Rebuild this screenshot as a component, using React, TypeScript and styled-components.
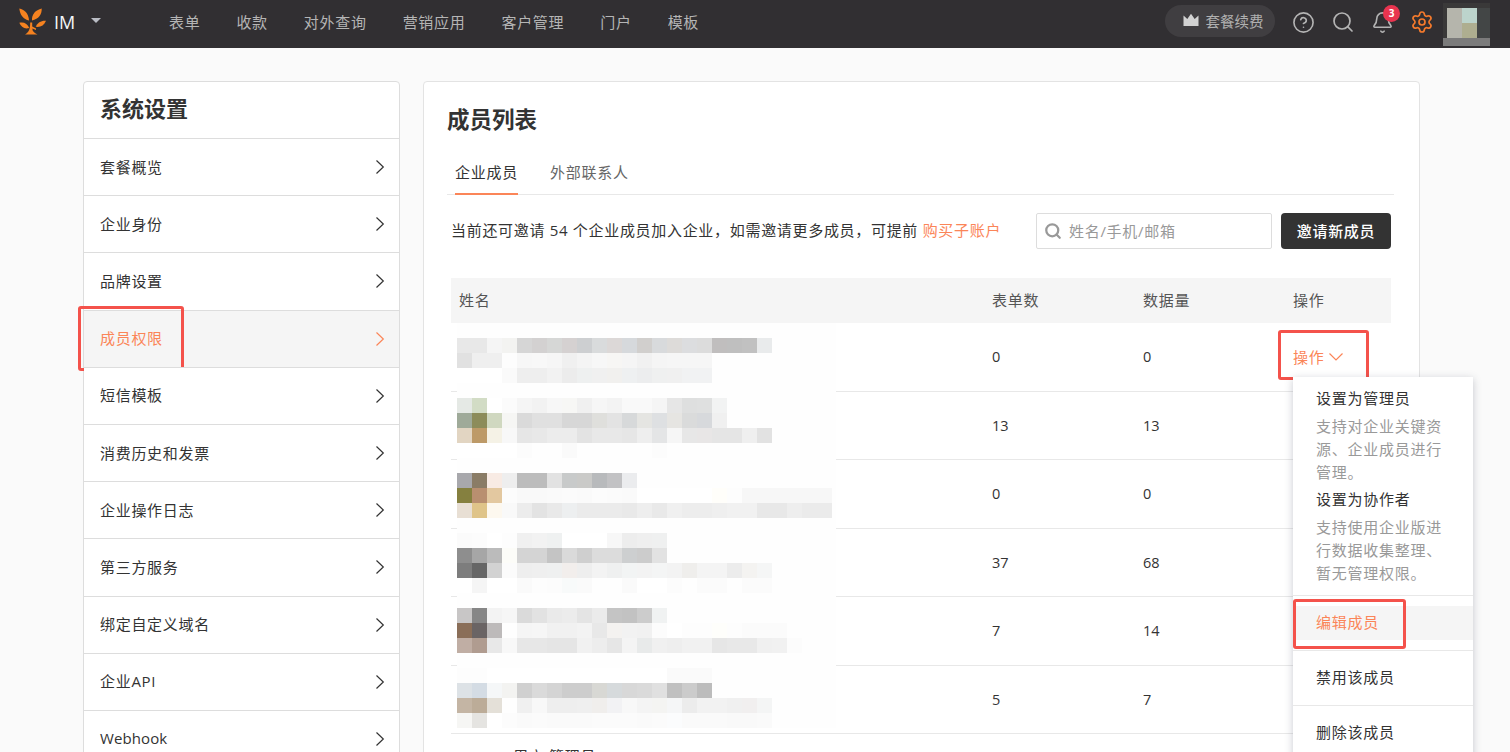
import React from 'react'
import styled, { createGlobalStyle } from 'styled-components'
import { Bell, CircleHelp, Search, Settings } from 'lucide-react'

const GlobalStyle = createGlobalStyle`
  html, body {
    margin: 0;
    height: 752px;
    overflow: hidden;
    background: #fafafa;
    font-family: "Open Sans", "Noto Sans CJK SC", sans-serif;
    color: #333;
  }
  * { box-sizing: border-box; }
`

const ORANGE = '#fb8558'

const TopBar = styled.header`
  display: flex;
  align-items: center;
  height: 48px;
  background: #312f32;
  padding-left: 17px;
`
const Brand = styled.div`
  display: flex;
  align-items: center;
  width: 152px;
  margin-bottom: 4px;
  color: #f4f6f8;
  font-size: 18px;
`
const BrandName = styled.span`
  margin-left: 7px;
  width: 37px;
`
const Caret = styled.span`
  width: 0;
  height: 0;
  border-left: 5px solid transparent;
  border-right: 5px solid transparent;
  border-top: 5px solid #b9bcc4;
  margin-bottom: 4px;
`
const Nav = styled.nav`
  display: flex;
  gap: 36px;
  margin-bottom: 3px;
`
const NavItem = styled.span`
  font-size: 15px;
  letter-spacing: 0.7px;
  color: #b5b5b5;
  padding-bottom: 2px;
`
const TopRight = styled.div`
  display: flex;
  align-items: center;
  margin-left: auto;
  margin-right: 20px;
`
const Renew = styled.div`
  display: flex;
  align-items: center;
  gap: 7px;
  width: 110px;
  height: 32px;
  margin: 0 19px 6px 0;
  padding: 0 0 2px 18px;
  border-radius: 16px;
  background: #403e41;
  color: #b0b0b0;
  font-size: 14.5px;
`
const TopIcon = styled.span<{ $color?: string }>`
  position: relative;
  display: flex;
  align-items: center;
  justify-content: center;
  flex: none;
  width: 20px;
  height: 20px;
  margin: 0 19.5px 4px 0;
  color: ${p => p.$color || '#b4b4b4'};
  svg { flex: none; }
  &:last-of-type { margin-right: 11px; }
`
const Badge = styled.span`
  position: absolute;
  left: 10.5px;
  top: -7px;
  width: 17px;
  height: 17px;
  border-radius: 50%;
  background: #e8344f;
  color: #fff;
  font-size: 10px;
  font-weight: 700;
  line-height: 17px;
  text-align: center;
`
const Page = styled.div`
  display: flex;
  align-items: flex-start;
  gap: 23px;
  width: 1336px;
  margin: 33px 0 0 83px;
`
const Side = styled.aside`
  width: 317px;
  flex: none;
  background: #fff;
  border: 1px solid #ddd;
  border-radius: 4px 4px 0 0;
`
const SideTitle = styled.h2`
  margin: 0;
  height: 56px;
  padding-left: 16px;
  font-size: 22px;
  font-weight: 700;
  line-height: 53px;
  color: #333;
`
const SideItem = styled.div<{ $active?: boolean }>`
  position: relative;
  display: flex;
  align-items: center;
  justify-content: space-between;
  height: 57.2px;
  padding: 0 14px 0 16px;
  border-top: 1px solid #ddd;
  font-size: 15px;
  letter-spacing: 0.7px;
  color: ${p => (p.$active ? ORANGE : '#333')};
  background: ${p => (p.$active ? '#f5f5f5' : '#fff')};
`
const SideLabel = styled.span<{ $latin?: boolean }>`
  padding-bottom: 2px;
  letter-spacing: ${p => (p.$latin ? '0.1px' : '0.7px')};
`
const Mark = styled.span<{ $l: number; $t: number; $w: number; $h: number }>`
  position: absolute;
  left: ${p => p.$l}px;
  top: ${p => p.$t}px;
  width: ${p => p.$w}px;
  height: ${p => p.$h}px;
  border: 3px solid #f4524b;
  border-radius: 3px;
  pointer-events: none;
`
const Card = styled.main`
  flex: 1;
  height: 760px;
  padding: 23px 25px 0 23px;
  background: #fff;
  border: 1px solid #e3e3e3;
  border-radius: 4px 4px 0 0;
`
const Title = styled.h1`
  margin: 0;
  font-size: 22.5px;
  font-weight: 700;
  line-height: 30px;
  color: #333;
`
const Tabs = styled.div`
  display: flex;
  gap: 32px;
  height: 43px;
  margin-top: 17px;
  padding-left: 8px;
  border-bottom: 1px solid #e8e8e8;
`
const Tab = styled.div<{ $active?: boolean }>`
  height: 43px;
  font-size: 15px;
  letter-spacing: 0.75px;
  line-height: 40px;
  color: ${p => (p.$active ? '#333' : '#666')};
  border-bottom: ${p => (p.$active ? `2px solid ${ORANGE}` : 'none')};
`
const Toolbar = styled.div`
  display: flex;
  align-items: center;
  height: 36px;
  margin: 18px 3px 0 4px;
`
const Notice = styled.p`
  flex: 1;
  margin: 0;
  padding-bottom: 3px;
  font-size: 15px;
  letter-spacing: 0.69px;
  color: #333;
`
const Link = styled.span`
  color: ${ORANGE};
`
const SearchBox = styled.label`
  display: flex;
  align-items: center;
  gap: 7px;
  width: 236px;
  height: 36px;
  padding: 0 0 1px 7px;
  border: 1px solid #ddd;
  border-radius: 2px;
  color: #999;
  font-size: 15px;
  letter-spacing: 0.7px;
`
const InviteButton = styled.button`
  width: 110px;
  height: 36px;
  margin-left: 9px;
  padding: 0 0 2px;
  border: none;
  border-radius: 4px;
  background: #333;
  color: #fff;
  font: 500 15px "Open Sans", "Noto Sans CJK SC", sans-serif;
  letter-spacing: 0.7px;
`
const Table = styled.div`
  position: relative;
  margin: 29px 3px 0 4px;
`
const cols = 'grid-template-columns: 533px 151px 150px 106px;'
const Head = styled.div`
  display: grid;
  ${cols}
  align-items: center;
  height: 45px;
  padding-bottom: 2px;
  background: #f5f5f5;
  font-size: 15px;
  letter-spacing: 0.7px;
  color: #555;
`
const Row = styled.div`
  display: grid;
  ${cols}
  align-items: center;
  height: 68.5px;
  border-bottom: 1px solid #e8e8e8;
  font-size: 14.5px;
  color: #333;
`
const Cell = styled.div`
  position: relative;
  padding-left: 8px;
`
const LastRow = styled.div`
  padding: 11px 0 0 62px;
  font-size: 15px;
  letter-spacing: 0.7px;
  color: #333;
`
const Mosaic = styled.svg`
  position: absolute;
  left: 6px;
  top: 45px;
  display: block;
`
const Action = styled.span`
  display: inline-flex;
  align-items: center;
  gap: 4px;
  color: ${ORANGE};
  font-size: 15px;
  letter-spacing: 0.7px;
`
const Menu = styled.div`
  position: absolute;
  left: 8px;
  top: 31px;
  width: 180px;
  background: #fff;
  box-shadow: 0 2px 8px rgba(60, 70, 90, 0.28);
  z-index: 2;
`
const MenuInfo = styled.div`
  padding: 9px 23px 7px;
`
const MenuTitle = styled.div`
  margin-bottom: 5px;
  font-size: 15px;
  letter-spacing: 0.75px;
  line-height: 24px;
  color: #333;
`
const MenuDesc = styled.div`
  width: 132px;
  margin-bottom: 4px;
  font-size: 15px;
  letter-spacing: 0.75px;
  line-height: 22.7px;
  color: #999;
`
const MenuDivider = styled.div`
  height: 1px;
  background: #e8e8e8;
`
const MenuItem = styled.div<{ $hot?: boolean }>`
  position: relative;
  display: flex;
  align-items: center;
  height: 34px;
  margin: 10px 0;
  padding: 0 0 3px 23px;
  font-size: 15px;
  letter-spacing: 0.75px;
  color: ${p => (p.$hot ? ORANGE : '#333')};
  background: ${p => (p.$hot ? '#f5f5f5' : '#fff')};
`

const Logo = () => (
  <svg width="30" height="30" viewBox="0 0 30 30" fill="#f58220">
    <path d="M2.3 1.5C7 2.5 11.5 5.5 12 13.5 6.5 12.5 3 8 2.3 1.5Z" />
    <path d="M24.7 1.5C25 7.5 21.5 12 15 13.5 14.5 7.5 18.5 3 24.7 1.5Z" />
    <path d="M2.3 15.8C6.5 14.5 10.5 16.5 12.3 21 7.5 22.5 4 20 2.3 15.8Z" />
    <path d="M29 13.7C27 18.5 23.5 20.5 18.7 19.8 20.5 15.5 24.5 13.2 29 13.7Z" />
    <path d="M13.2 15.5H15.2V19.5L19 21.5V23L15.4 21.6C15.4 24 16.5 25.5 20.5 27.5H8C11.5 25.5 13.2 23 13.2 15.5Z" />
  </svg>
)
const Crown = () => (
  <svg width="16" height="14" viewBox="0 0 16 14" fill="#d2d2d2">
    <path d="M0.5 2.5 4.3 6 8 0.8 11.7 6 15.5 2.5V13H0.5Z" />
  </svg>
)
const ChevronR = () => (
  <svg width="10" height="16" viewBox="0 0 10 16" fill="none" stroke="currentColor" strokeWidth="1.2">
    <path d="M1.5 1.5 8.3 8 1.5 14.5" />
  </svg>
)
const ChevronD = () => (
  <svg width="16" height="10" viewBox="0 0 16 10" fill="none" stroke="currentColor" strokeWidth="1.2">
    <path d="M1.5 1.5 8 8 14.5 1.5" />
  </svg>
)
const AVATAR: [number, number, number, number, string][] = [
  [0, 0, 47, 43, '#3a3939'],
  [4, 5, 15, 30, '#b5b5ac'],
  [19, 5, 15, 15, '#bcd4cc'],
  [19, 20, 15, 15, '#aeae90'],
  [34, 5, 13, 30, '#434646'],
  [0, 35, 47, 8, '#7b7b7b'],
]
const Avatar = () => (
  <svg width="47" height="43" viewBox="0 0 47 43" shapeRendering="crispEdges">
    {AVATAR.map(([x, y, w, h, fill]) => (
      <rect key={`${x}-${y}`} x={x} y={y} width={w} height={h} fill={fill} />
    ))}
  </svg>
)

// blurred names: one row of 15px cells per line, key is the line index
const PIXELS: Record<number, string> = {
  1: 'e8e8e8 e8e8e8 f5f5f5 f3f3f1 d6d6d6 d3d1d1 d6d7d6 d5d1d1 cdcfd1 d9dbdc dcd8d7 d6d9dc d1cfcd d8dadc dddbd9 dcdddf dcdcdc c0bebe bfbfbf c1c1c1 e9ebec',
  2: 'e1e1e1 efefef efefef fdfdfd f7f7f7 f8f8f8 f6f6f6 f0f0f0 f4f4f4 f7f7f7 f7f6f4 f5f5f5 f1f1f1 f5f5f5 f6f6f6 f6f6f6 f6f6f6',
  3: 'ffffff ffffff ffffff fafafa eeeeee eeeeee f2f2f2 ececec eef0f0 f0f0f0 f1f0ee eef0f1 ecedee eff0f0 f0f0f0 f1f2f3 f1f2f3',
  5: 'e5e9e5 d2dcc5 ffffff fbfbfb f5f5f5 f2f2f2 f7f7f7 f7f7f5 f0f0f0 f6f6f6 f3f3f3 f9f9f9 f9f9f9 f5f5f5 e6e6e6 dedfdf dfe0e0 f2f3f3',
  6: '9faa99 8c8c5a d0d8c0 f6f6f4 dadada e0e0e0 e0e0e0 d7d7d7 d7d7d7 dfdfdc e3e3e3 d7d9da e5e5e2 dee0e2 e6e5e2 dadbdb d7d9dc f0f0f0',
  7: 'e2d5c2 bd9a68 f5f2e6 f8f8f8 e6e6e6 e8e8e8 ececec ececec e3e3e3 e8e8e8 e8e8e8 e6e6e6 eeeeee e4e5e6 f6f6f6 e7e7e7 e8e6e6 e5e5e5 e5e5e5 efefef e2e2e2',
  8: 'ffffff ffffff ffffff ffffff fcfcfc fefefe fefefe fafafa fefefe fefefe fefefe fefefe fefefe fcfcfc',
  10: 'a8a8ac 8a7c66 f8ebe4 eeeeee bcbcbc bcbcbc e2e2e2 c8caca cacac8 b8babc c2c2c4 ebecee',
  11: '85803f b98f70 e3c8a0 fcfcfc f9f9f9 f9f9f9 fafafa fbfbfb fafafa fcfcfc fbfbfb fafafa ffffff ffffff ffffff ffffff ffffff fffefa fdfdfd f7f7f7 f7f7f7 f7f7f7 f7f7f7 f7f7f7 f7f7f7',
  12: 'e8dfd4 dfc489 fdf8ef f9f9f9 ececec e3e3e3 e9e9e9 edeff0 ebebeb ebebeb ebebeb e9e9e9 eeeeee e9e9e9 f0f0f0 ededed ededed efefef f1f1f1 f1f1f1 e8e8e8 e8e8e8 eeeeee ebebeb ebebeb',
  14: 'fbfbfb fcfcfc ffffff fdfdfd f0f0f0 f2f2f2 eff1f1 ffffff ffffff ffffff f7f7f7 ededed efefef eff0f0',
  15: '8e8e8e a6a6a6 bbbbbb fcfcf8 d4d4d4 d4d4d4 c4c4c4 dadada cfcfcf dcdcdc dcdcdc cdcfd0 cccccc e2e2e2',
  16: '7d7d7d 666666 d2d2d2 fbfbfb eeeeee efefef eff0f0 f2eeec eeeeee f3f3f3 eff0f0 f2f4f4 f3f3f3 f4f5f5 f3f3f3 efeeec f4f4f4 f4f4f4 ececec f4f3f1 f5f6f6',
  17: 'ffffff f5f5f5 ffffff ffffff fafafa fdfdfd fcfcfc f8fafa fafafa fefefe fefefe fafafa ffffff ffffff fcfcfc fefefe fbfbfb fbfbfb fefefe fbfbfb fbfbfb',
  19: 'c8c6c6 868686 f3f3f3 f6f6f6 dadada e2e2e2 eaeaea ececec e4e4e4 ebebeb c4c4c4 c2c2c2 cccccc f0f2f2',
  20: '8a6e58 6a6464 bdbaba fefefe f5f5f5 f6f6f6 f1f1f1 f1f1f1 f3f3f3 e8e8e8 f4f2f0 f2f2f2 f1f1f1 fcfcfc ffffff fdfdfd fdfdfd fefefb fdfdfd fbfbfb fbfbfb fbfbfb',
  21: 'c0aea4 b09c90 e8e8e8 f8f8f8 e7e7e7 e7e7e7 e5e5e5 e5e5e5 f1f1f1 ededed e6e6e6 f4f4f4 e8eaea f0f0f0 eeeeee f1f1f1 f1f1f1 e6e6e6 e8e8e8 e8e8e8 f0f0f0 f1f1f1 fcfcfc',
  23: 'fdfdfd fdfdfd ffffff ffffff ffffff ffffff ffffff ffffff ffffff ffffff ffffff ffffff ffffff ffffff fafafa fafafa fafafa',
  24: 'dde2e6 d4dce4 f5f7f8 f3f3f1 d0d0d0 dadada d4d4d4 cdcdcd cdcdcd d8d8d4 d6dadc d8d8d8 dadada e0e0e0 c0c0c0 cbcbcb bcbcbc',
  25: 'c4b5a4 bcac98 e4e0d8 fefefe f0f0f0 f8f8f8 eeeeee eeeeee efefef f0eeec f2f2f4 f8f8f8 f4f4f4 f4f4f2 f5f6f7 ececec f2f2f2 f2f2f2 f0f0f0 f1efef f4f5f5',
  26: 'f6f6f4 e5e4e1 ffffff fcfcfc fafafa fbfbfb fafafa fafafa fafafa fbfbfb fbfbfb fbfbfb fafafa fbfbfb fbfcfd fafafa fafafa fafafa f9f9f9 f9f9f9 fafafa',
}

const Blur = () => (
  <Mosaic width="379" height="405" viewBox="0 0 379 405" shapeRendering="crispEdges">
    <rect width="379" height="405" fill="#fefefe" />
    {Object.entries(PIXELS).map(([line, row]) =>
      row.split(' ').map((c, i) => (
        <rect key={`${line}-${i}`} x={i * 15} y={Number(line) * 15} width="15" height="15" fill={`#${c}`} />
      ))
    )}
  </Mosaic>
)

const SIDE_ITEMS = ['套餐概览', '企业身份', '品牌设置', '成员权限', '短信模板', '消费历史和发票', '企业操作日志', '第三方服务', '绑定自定义域名', '企业API', 'Webhook']
const NAV_ITEMS = ['表单', '收款', '对外查询', '营销应用', '客户管理', '门户', '模板']
const ROWS = [['0', '0'], ['13', '13'], ['0', '0'], ['37', '68'], ['7', '14'], ['5', '7']]

export default function App() {
  return (
    <>
      <GlobalStyle />
      <TopBar>
        <Brand>
          <Logo />
          <BrandName>IM</BrandName>
          <Caret />
        </Brand>
        <Nav>
          {NAV_ITEMS.map(n => <NavItem key={n}>{n}</NavItem>)}
        </Nav>
        <TopRight>
          <Renew><Crown />套餐续费</Renew>
          <TopIcon><CircleHelp size={23} strokeWidth={1.7} /></TopIcon>
          <TopIcon><Search size={24} strokeWidth={1.7} /></TopIcon>
          <TopIcon><Bell size={23} strokeWidth={1.7} /><Badge>3</Badge></TopIcon>
          <TopIcon $color="#f57a2c"><Settings size={24} strokeWidth={1.7} /></TopIcon>
          <Avatar />
        </TopRight>
      </TopBar>
      <Page>
        <Side>
          <SideTitle>系统设置</SideTitle>
          {SIDE_ITEMS.map(s => (
            <SideItem key={s} $active={s === '成员权限'}>
              <SideLabel $latin={s === 'Webhook'}>{s}</SideLabel>
              <ChevronR />
              {s === '成员权限' && <Mark $l={-6} $t={-5} $w={106} $h={65} />}
            </SideItem>
          ))}
        </Side>
        <Card>
          <Title>成员列表</Title>
          <Tabs>
            <Tab $active>企业成员</Tab>
            <Tab>外部联系人</Tab>
          </Tabs>
          <Toolbar>
            <Notice>当前还可邀请 54 个企业成员加入企业，如需邀请更多成员，可提前 <Link>购买子账户</Link></Notice>
            <SearchBox><Search size={18} strokeWidth={3} color="#999" />姓名/手机/邮箱</SearchBox>
            <InviteButton>邀请新成员</InviteButton>
          </Toolbar>
          <Table>
            <Head>
              <Cell>姓名</Cell>
              <Cell>表单数</Cell>
              <Cell>数据量</Cell>
              <Cell>操作</Cell>
            </Head>
            {ROWS.map(([forms, records], i) => (
              <Row key={i}>
                <Cell />
                <Cell>{forms}</Cell>
                <Cell>{records}</Cell>
                {i === 0 ? (
                  <Cell>
                    <Action>操作 <ChevronD /></Action>
                    <Mark $l={-7} $t={-16} $w={91} $h={50} />
                    <Menu>
                      <MenuInfo>
                        <MenuTitle>设置为管理员</MenuTitle>
                        <MenuDesc>支持对企业关键资源、企业成员进行管理。</MenuDesc>
                        <MenuTitle>设置为协作者</MenuTitle>
                        <MenuDesc>支持使用企业版进行数据收集整理、暂无管理权限。</MenuDesc>
                      </MenuInfo>
                      <MenuDivider />
                      <MenuItem $hot>
                        编辑成员
                        <Mark $l={0} $t={-7} $w={113} $h={50} />
                      </MenuItem>
                      <MenuDivider />
                      <MenuItem>禁用该成员</MenuItem>
                      <MenuDivider />
                      <MenuItem>删除该成员</MenuItem>
                    </Menu>
                  </Cell>
                ) : <Cell />}
              </Row>
            ))}
            <LastRow>用户 管理员</LastRow>
            <Blur />
          </Table>
        </Card>
      </Page>
    </>
  )
}
